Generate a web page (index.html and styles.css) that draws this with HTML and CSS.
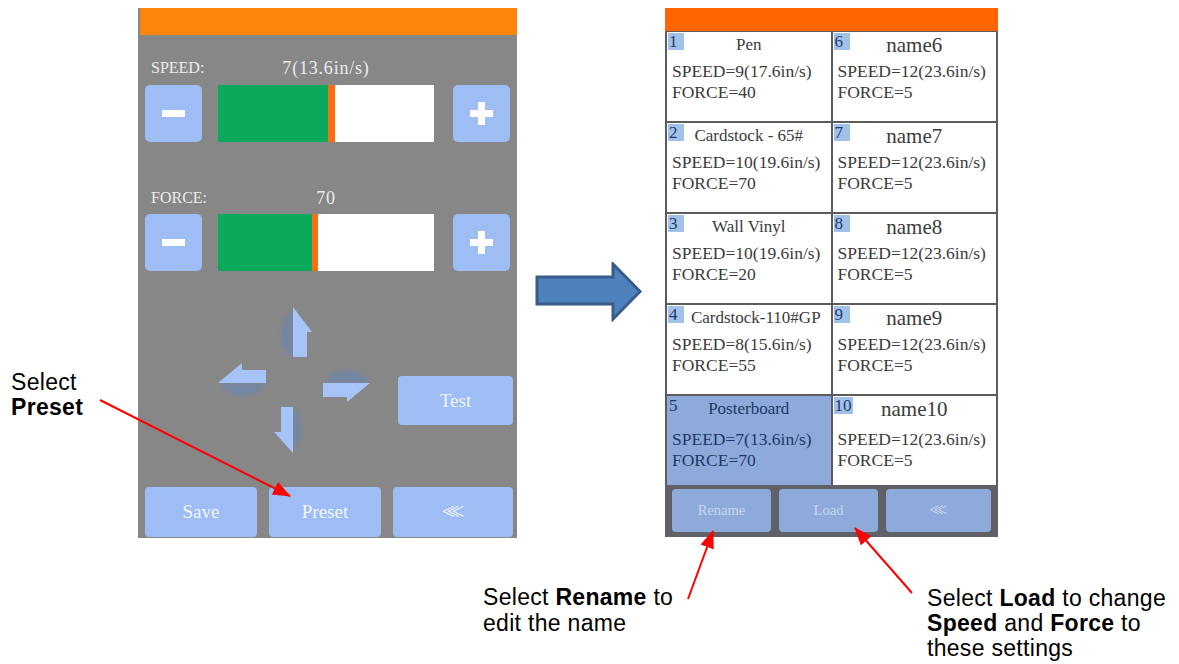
FILE: index.html
```html
<!DOCTYPE html>
<html lang="en">

<head>
  <meta charset="UTF-8">
  <meta name="viewport" content="width=device-width, initial-scale=1.0">
  <title>Preset settings</title>
  <link rel="stylesheet" href="styles.css">
</head>

<body>
  <div class="figure">
    <div class="panels">
      <!-- cutter screen: speed / force -->
      <div class="device">
        <div class="device-top"></div>

        <div class="ctrl-head">
          <span class="ctrl-label">SPEED:</span>
          <span class="ctrl-value">7(13.6in/s)</span>
        </div>
        <div class="ctrl-row">
          <div class="step minus"></div>
          <div class="meter">
            <div class="meter-fill" style="width: 110px"></div>
            <div class="meter-mark"></div>
          </div>
          <div class="step plus"></div>
        </div>

        <div class="ctrl-head force-head">
          <span class="ctrl-label">FORCE:</span>
          <span class="ctrl-value">70</span>
        </div>
        <div class="ctrl-row">
          <div class="step minus"></div>
          <div class="meter">
            <div class="meter-fill" style="width: 94px"></div>
            <div class="meter-mark thin"></div>
          </div>
          <div class="step plus"></div>
        </div>

        <div class="device-mid">
          <svg class="jog" width="170" height="160" viewBox="0 0 170 160">
            <defs>
              <filter id="soft" x="-50%" y="-50%" width="200%" height="200%">
                <feGaussianBlur stdDeviation="2" />
              </filter>
            </defs>
            <g fill="#7086a8" opacity="0.85" filter="url(#soft)">
              <path d="M83,12 A12,22 0 0 0 83,56 Z" />
              <path d="M12,83 A20,12 0 0 0 54,83 Z" />
              <path d="M116,83 A20,12 0 0 1 158,83 Z" />
              <path d="M83,108 A12,22 0 0 1 83,150 Z" />
            </g>
            <g fill="#a6c4f7">
              <polygon points="83,7 102,32 97,32 97,57 83,57" />
              <polygon points="8,83 32,63 32,70 56,70 56,83" />
              <polygon points="113,83 160,83 137,102 137,97 113,97" />
              <polygon points="71,107 83,107 83,153 64,132 71,132" />
            </g>
          </svg>
          <div class="btn test">Test</div>
        </div>

        <div class="device-actions">
          <div class="btn">Save</div>
          <div class="btn">Preset</div>
          <div class="btn back">&lt;&lt;&lt;</div>
        </div>
      </div>

      <svg class="next-arrow" width="108" height="60" viewBox="0 0 108 60">
        <polygon points="2,15 78,15 78,2 105,29.5 78,57 78,42 2,42" fill="#4f81bd" stroke="#385d8a" stroke-width="3" />
      </svg>

      <!-- preset list screen -->
      <div class="presets">
        <div class="presets-top"></div>
        <div class="preset-grid">
          <div class="preset">
            <span class="preset-no">1</span>
            <div class="preset-name">Pen</div>
            <div>SPEED=9(17.6in/s)</div>
            <div>FORCE=40</div>
          </div>
          <div class="preset">
            <span class="preset-no">6</span>
            <div class="preset-name big">name6</div>
            <div>SPEED=12(23.6in/s)</div>
            <div>FORCE=5</div>
          </div>
          <div class="preset">
            <span class="preset-no">2</span>
            <div class="preset-name">Cardstock - 65#</div>
            <div>SPEED=10(19.6in/s)</div>
            <div>FORCE=70</div>
          </div>
          <div class="preset">
            <span class="preset-no">7</span>
            <div class="preset-name big">name7</div>
            <div>SPEED=12(23.6in/s)</div>
            <div>FORCE=5</div>
          </div>
          <div class="preset">
            <span class="preset-no">3</span>
            <div class="preset-name">Wall Vinyl</div>
            <div>SPEED=10(19.6in/s)</div>
            <div>FORCE=20</div>
          </div>
          <div class="preset">
            <span class="preset-no">8</span>
            <div class="preset-name big">name8</div>
            <div>SPEED=12(23.6in/s)</div>
            <div>FORCE=5</div>
          </div>
          <div class="preset">
            <span class="preset-no">4</span>
            <div class="preset-name long">Cardstock-110#GP</div>
            <div>SPEED=8(15.6in/s)</div>
            <div>FORCE=55</div>
          </div>
          <div class="preset">
            <span class="preset-no">9</span>
            <div class="preset-name big">name9</div>
            <div>SPEED=12(23.6in/s)</div>
            <div>FORCE=5</div>
          </div>
          <div class="preset active spaced">
            <span class="preset-no">5</span>
            <div class="preset-name">Posterboard</div>
            <div>SPEED=7(13.6in/s)</div>
            <div>FORCE=70</div>
          </div>
          <div class="preset spaced">
            <span class="preset-no">10</span>
            <div class="preset-name big">name10</div>
            <div>SPEED=12(23.6in/s)</div>
            <div>FORCE=5</div>
          </div>
        </div>
        <div class="preset-actions">
          <div class="pbtn">Rename</div>
          <div class="pbtn">Load</div>
          <div class="pbtn back">&lt;&lt;&lt;</div>
        </div>
      </div>
    </div>

    <!-- callouts -->
    <div class="note note-preset">Select<br><b>Preset</b></div>
    <div class="note note-rename">Select <b>Rename</b> to<br>edit the name</div>
    <div class="note note-load">Select <b>Load</b> to change<br><b>Speed</b> and <b>Force</b> to<br>these settings</div>

    <svg class="callouts" width="1179" height="664" viewBox="0 0 1179 664">
      <defs>
        <marker id="head" markerWidth="9" markerHeight="7" refX="8.5" refY="3.5" orient="auto" markerUnits="strokeWidth">
          <polygon points="0,0 9,3.5 0,7" fill="#ff0000" />
        </marker>
      </defs>
      <g stroke="#ff0000" stroke-width="2" marker-end="url(#head)">
        <line x1="100" y1="400" x2="290" y2="496" />
        <line x1="688" y1="599" x2="713" y2="531" />
        <line x1="912" y1="593" x2="855" y2="528" />
      </g>
    </svg>
  </div>
</body>

</html>
```

FILE: styles.css
```css
body {
  margin: 0;
  background-color: white;
}

.figure {
  position: relative;
  width: 1179px;
  height: 664px;
  overflow: hidden;
  font-family: "Liberation Serif", serif;
}

.panels {
  display: flex;
  align-items: flex-start;
  padding: 8px 0 0 138px;
}

/* left screen */
.device {
  width: 379px;
  height: 530px;
  background-color: #878787;
  display: flex;
  flex-direction: column;
}

.device-top {
  height: 27px;
  margin-left: 2px;
  background-color: #ff860d;
}

.ctrl-head {
  display: flex;
  height: 22px;
  line-height: 22px;
  margin: 22px 0 6px;
  padding-left: 13px;
  color: #ececec;
  white-space: nowrap;
}

.force-head {
  margin: 45px 0 5px;
}

.ctrl-label {
  width: 67px;
  font-size: 16px;
}

.ctrl-value {
  width: 216px;
  text-align: center;
  font-size: 18px;
  letter-spacing: 0.8px;
}

.ctrl-row {
  display: flex;
  height: 57px;
  padding-left: 7px;
}

.step {
  position: relative;
  width: 57px;
  background-color: #9dbdf4;
  border-radius: 5px;
}

.step::before {
  content: "";
  position: absolute;
  left: 17px;
  top: 25px;
  width: 23px;
  height: 7px;
  background-color: #fff;
}

.plus::after {
  content: "";
  position: absolute;
  left: 25px;
  top: 17px;
  width: 7px;
  height: 23px;
  background-color: #fff;
}

.meter {
  display: flex;
  width: 216px;
  margin: 0 19px 0 16px;
  background-color: #fff;
}

.meter-fill {
  background-color: #0aa95b;
}

.meter-mark {
  width: 7px;
  background-color: #ff6c12;
}

.meter-mark.thin {
  width: 6px;
}

.device-mid {
  display: flex;
  align-items: flex-start;
  height: 216px;
}

.jog {
  margin: 29px 0 0 72px;
}

.btn {
  display: flex;
  align-items: center;
  justify-content: center;
  height: 50px;
  background-color: #9dbdf4;
  border-radius: 4px;
  color: #f2f5fb;
  font-size: 19px;
}

.btn.test {
  width: 115px;
  height: 49px;
  margin: 105px 0 0 18px;
}

.device-actions {
  display: flex;
  gap: 12px;
  padding: 0 4px 1px 7px;
}

.device-actions .btn {
  flex: 1;
}

.btn.back {
  font-size: 23px;
  letter-spacing: -8px;
  padding-right: 8px;
}

.next-arrow {
  margin: 254px 0 0 18px;
}

/* right screen */
.presets {
  display: flex;
  flex-direction: column;
  width: 333px;
  height: 529px;
  margin-left: 22px;
  background-color: #5c5c5c;
}

.presets-top {
  height: 23px;
  background-color: #ff6600;
}

.preset-grid {
  flex: 1;
  display: grid;
  grid-template-columns: 1fr 1fr;
  grid-template-rows: repeat(5, 1fr);
  gap: 2px;
  padding: 1px 2px 0;
}

.preset {
  position: relative;
  padding: 2px 0 0 5px;
  background-color: #fff;
  color: #3b3b3b;
  font-size: 17.5px;
  line-height: 21px;
  white-space: nowrap;
}

.preset-no {
  position: absolute;
  left: 1px;
  top: 1px;
  min-width: 14px;
  height: 17px;
  padding: 0 1px;
  background-color: #a2c1e8;
  color: #1f3a6b;
  font-size: 17px;
  line-height: 17px;
}

.preset-name {
  height: 22px;
  line-height: 22px;
  margin-bottom: 5px;
  padding-right: 5px;
  text-align: center;
  font-size: 17px;
}

.preset-name.big {
  font-size: 21px;
}

.preset-name.long {
  padding-left: 14px;
}

.preset.spaced .preset-name {
  margin-bottom: 9px;
}

.preset.active {
  background-color: #8eaadb;
  color: #203864;
}

.preset.active .preset-no {
  background-color: transparent;
}

.preset-actions {
  display: flex;
  gap: 8px;
  height: 52px;
  box-sizing: border-box;
  padding: 4px 7px 5px;
  background-color: #5f6166;
}

.pbtn {
  flex: 1;
  display: flex;
  align-items: center;
  justify-content: center;
  background-color: #8eaadb;
  border-radius: 4px;
  color: #c9d6ef;
  font-size: 14.5px;
}

.pbtn.back {
  font-size: 18px;
  letter-spacing: -6px;
  padding-right: 6px;
}

/* callouts */
.note {
  position: absolute;
  font-family: "Liberation Sans", Arial, sans-serif;
  font-size: 23px;
  line-height: 25px;
  letter-spacing: 0.3px;
  color: #000;
}

.note-preset {
  left: 11px;
  top: 370px;
}

.note-rename {
  left: 483px;
  top: 584px;
  line-height: 26px;
}

.note-load {
  left: 927px;
  top: 586px;
}

.callouts {
  position: absolute;
  left: 0;
  top: 0;
  pointer-events: none;
}
```
